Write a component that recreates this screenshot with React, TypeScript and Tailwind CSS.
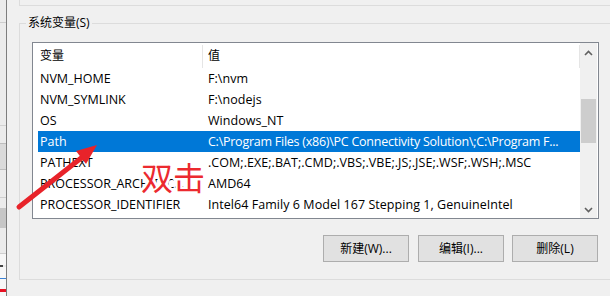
import React from "react";

const rows: { name: string; value: string; selected?: boolean }[] = [
  { name: "NVM_HOME", value: "F:\\nvm" },
  { name: "NVM_SYMLINK", value: "F:\\nodejs" },
  { name: "OS", value: "Windows_NT" },
  {
    name: "Path",
    value: "C:\\Program Files (x86)\\PC Connectivity Solution\\;C:\\Program F...",
    selected: true,
  },
  { name: "PATHEXT", value: ".COM;.EXE;.BAT;.CMD;.VBS;.VBE;.JS;.JSE;.WSF;.WSH;.MSC" },
  { name: "PROCESSOR_ARCHITEC...", value: "AMD64" },
  { name: "PROCESSOR_IDENTIFIER", value: "Intel64 Family 6 Model 167 Stepping 1, GenuineIntel" },
];

function Chevron({ up }: { up?: boolean }) {
  return (
    <svg width="9" height="6" viewBox="0 0 9 6" className="block">
      <path
        d={up ? "M1 5 L4.5 1.5 L8 5" : "M1 1 L4.5 4.5 L8 1"}
        fill="none"
        stroke="#606060"
        strokeWidth="1.6"
      />
    </svg>
  );
}

export default function App() {
  return (
    <div className="relative flex w-[610px] h-[296px] overflow-hidden bg-[#f0f0f0] font-['Open_Sans','Noto_Sans_CJK_SC',sans-serif] text-[12px] text-black">
      {/* sliver of the window behind */}
      <div className="flex w-[7px] shrink-0 flex-col border-r border-[#7d7d7d] bg-[#ebebeb]">
        <div className="h-[22px]" />
        <div className="h-px bg-[#cdcdcd]" />
        <div className="h-[102px]" />
        <div className="h-px bg-[#d2d2d2]" />
        <div className="h-[17px]" />
        <div className="h-[27px] border-y border-[#bdbdbd] bg-[#dadada]" />
        <div className="h-[27px]" />
        <div className="h-px bg-[#cfcfcf]" />
        <div className="h-[10px]" />
        <div className="h-[20px] bg-[#c6c6c6]" />
        <div className="h-[25px]" />
        <div className="h-px bg-[#cfcfcf]" />
        <div className="h-[11px] bg-[#f7f7f7]" />
        <div className="h-[2px] w-[3px] bg-[#444]" />
        <div className="h-[11px] bg-[#f7f7f7]" />
        <div className="h-px bg-[#3b82d6]" />
        <div className="h-[10px] bg-[#f7f7f7]" />
        <div className="h-[3px] bg-[#e81123]" />
        <div className="flex-1 bg-[#f7f7f7]" />
      </div>

      {/* dialog */}
      <div className="flex min-w-0 flex-1 flex-col">
        <div className="ml-[12px] h-[6px] shrink-0 border-b border-l border-[#dcdcdc]" />
        <div className="relative ml-[12px] mt-[17px] h-[257px] shrink-0 border-y border-l border-[#dcdcdc] pl-[12px] pt-[18px]">
          <span className="absolute left-[6px] top-[-9px] bg-[#f0f0f0] px-[2px] leading-[16px]">
            系统变量(S)
          </span>

          {/* list view */}
          <div className="flex h-[177px] w-[567px] border border-[#828790] bg-white">
            <div className="flex w-[547px] flex-col">
              <div className="flex h-[25px] shrink-0 items-center pt-[1px]">
                <div className="w-[169px] pl-[7px]">变量</div>
                <div className="h-[23px] w-px bg-[#e5e5e5]" />
                <div className="w-[376px] pl-[5px]">值</div>
                <div className="h-[23px] w-px bg-[#e5e5e5]" />
              </div>
              {rows.map((r) => (
                <div
                  key={r.name}
                  className={
                    "ml-[5px] flex h-[21px] shrink-0 items-center whitespace-nowrap pt-[2px] text-[12.5px] " +
                    (r.selected ? "bg-[#0078d7] text-white" : "")
                  }
                >
                  <div className="w-[165px] overflow-hidden pl-[2px]">{r.name}</div>
                  <div
                    className={
                      "flex-1 overflow-hidden pl-[5px] " +
                      (r.selected ? "tracking-[-0.25px]" : "tracking-[0.05px]")
                    }
                  >
                    {r.value}
                  </div>
                </div>
              ))}
            </div>
            {/* scrollbar */}
            <div className="flex w-[17px] flex-col bg-[#f0f0f0]">
              <div className="flex h-[17px] items-center justify-center pt-[2px]">
                <Chevron up />
              </div>
              <div className="mx-px mt-[39px] h-[44px] bg-[#cdcdcd]" />
              <div className="flex-1" />
              <div className="flex h-[17px] items-center justify-center">
                <Chevron />
              </div>
            </div>
          </div>

          {/* buttons */}
          <div className="mt-[16px] flex">
            <button className="ml-[291px] flex h-[27px] w-[86px] items-center justify-center border border-[#adadad] bg-[#e1e1e1]">
              新建(W)...
            </button>
            <button className="ml-[9px] flex h-[27px] w-[86px] items-center justify-center border border-[#adadad] bg-[#e1e1e1]">
              编辑(I)...
            </button>
            <button className="ml-[8px] flex h-[27px] w-[86px] items-center justify-center border border-[#adadad] bg-[#e1e1e1]">
              删除(L)
            </button>
          </div>
        </div>
      </div>

      {/* annotation: arrow */}
      <svg className="pointer-events-none absolute left-0 top-0" width="610" height="296">
        <line x1="19" y1="207" x2="85" y2="155" stroke="#e8232a" strokeWidth="5" strokeLinecap="round" />
        <polygon points="97,145 76,151 86,164" fill="#e8232a" />
      </svg>

      {/* annotation: text */}
      <div className="pointer-events-none absolute left-[141px] top-[160px] font-['Noto_Sans_CJK_SC',sans-serif] text-[32px] font-normal leading-none text-[#ec2a2f] [text-shadow:2px_0_#fff,-2px_0_#fff,0_2px_#fff,0_-2px_#fff,2px_2px_#fff,-2px_-2px_#fff,2px_-2px_#fff,-2px_2px_#fff]">
        双击
      </div>
    </div>
  );
}
